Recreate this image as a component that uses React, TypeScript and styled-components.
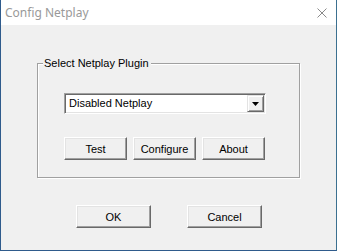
import React from "react";
import styled, { createGlobalStyle } from "styled-components";

const Global = createGlobalStyle`
  html, body { margin: 0; padding: 0; background: #f0f0f0; }
  * { box-sizing: border-box; }
`;

const Window = styled.div`
  width: 337px;
  height: 251px;
  display: flex;
  flex-direction: column;
  border-left: 1px solid #2f5b8c;
  border-right: 1px solid #3b7090;
  border-bottom: 1px solid #2f5b8c;
  background: #f0f0f0;
  overflow: hidden;
`;

const TitleBar = styled.div`
  height: 25px;
  flex: none;
  background: #ffffff;
  display: flex;
  align-items: center;
  justify-content: space-between;
  padding: 0 9px 0 4px;
`;

const Title = styled.span`
  font-family: "Segoe UI", "Noto Sans", "Open Sans", sans-serif;
  font-size: 12px;
  color: #999999;
  line-height: 16px;
`;

const CloseIcon = styled.svg`
  display: block;
  width: 10px;
  height: 10px;
`;

const Client = styled.div`
  flex: 1;
  display: flex;
  flex-direction: column;
  font-family: "Liberation Sans", Arial, sans-serif;
  font-size: 11px;
  color: #000;
`;

const Group = styled.fieldset`
  margin: 32px 0 0 36px;
  width: 263px;
  padding: 23px 0 17px 5px;
  border: 1px solid #a0a0a0;
  box-shadow: 1px 1px 0 #ffffff, inset 1px 1px 0 #ffffff;
`;

const Legend = styled.legend`
  margin-left: 0;
  padding: 0 2px 0 1px;
  line-height: 13px;
  background: #f0f0f0;
`;

const GroupBody = styled.div`
  padding-left: 21px;
  display: flex;
  flex-direction: column;
  gap: 23px;
`;

const Combo = styled.div`
  width: 202px;
  height: 21px;
  display: flex;
  align-items: stretch;
  background: #fff;
  border-top: 1px solid #a0a0a0;
  border-left: 1px solid #a0a0a0;
  border-right: 1px solid #ffffff;
  border-bottom: 1px solid #ffffff;
  box-shadow: inset 1px 1px 0 #696969, inset -1px -1px 0 #e3e3e3;
  padding: 1px;
`;

const ComboText = styled.span`
  flex: 1;
  padding-left: 3px;
  line-height: 17px;
`;

const DropButton = styled.div`
  width: 17px;
  flex: none;
  background: #f0f0f0;
  border-top: 1px solid #e3e3e3;
  border-left: 1px solid #e3e3e3;
  border-right: 1px solid #696969;
  border-bottom: 1px solid #696969;
  box-shadow: inset 1px 1px 0 #ffffff, inset -1px -1px 0 #a0a0a0;
  display: flex;
  align-items: center;
  justify-content: center;
`;

const Row = styled.div<{ $gap: number; $pad?: number; $top?: number }>`
  display: flex;
  gap: ${(p) => p.$gap}px;
  padding-left: ${(p) => p.$pad ?? 0}px;
  margin-top: ${(p) => p.$top ?? 0}px;
`;

const Button = styled.button<{ $w: number }>`
  width: ${(p) => p.$w}px;
  height: 23px;
  margin: 0;
  padding: 0;
  font-family: "Liberation Sans", Arial, sans-serif;
  font-size: 11px;
  color: #000;
  background: #f0f0f0;
  border-top: 1px solid #ffffff;
  border-left: 1px solid #ffffff;
  border-right: 1px solid #696969;
  border-bottom: 1px solid #696969;
  box-shadow: inset -1px -1px 0 #a0a0a0, inset 1px 1px 0 #e3e3e3;
  border-radius: 0;
  outline: none;
`;

export default function App() {
  return (
    <>
      <Global />
      <Window>
        <TitleBar>
          <Title>Config Netplay</Title>
          <CloseIcon viewBox="0 0 10 10">
            <path d="M0.5 0.5 L9.5 9.5 M9.5 0.5 L0.5 9.5" stroke="#8a8a8a" strokeWidth="1" fill="none" />
          </CloseIcon>
        </TitleBar>
        <Client>
          <Group>
            <Legend>Select Netplay Plugin</Legend>
            <GroupBody>
              <Combo>
                <ComboText>Disabled Netplay</ComboText>
                <DropButton>
                  <svg width="7" height="4" viewBox="0 0 7 4">
                    <polygon points="0,0 7,0 3.5,4" fill="#000" />
                  </svg>
                </DropButton>
              </Combo>
              <Row $gap={6}>
                <Button $w={63}>Test</Button>
                <Button $w={63}>Configure</Button>
                <Button $w={63}>About</Button>
              </Row>
            </GroupBody>
          </Group>
          <Row $gap={36} $pad={75} $top={27}>
            <Button $w={75}>OK</Button>
            <Button $w={75}>Cancel</Button>
          </Row>
        </Client>
      </Window>
    </>
  );
}
